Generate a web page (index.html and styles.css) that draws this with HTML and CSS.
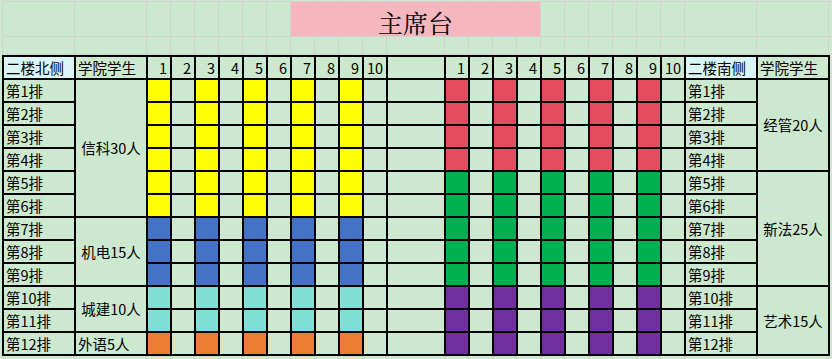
FILE: index.html
```html
<!DOCTYPE html>
<html lang="zh-CN">
<head>
<meta charset="utf-8">
<title>主席台</title>
<link rel="stylesheet" href="styles.css">
</head>
<body>
<div class="sheet">
  <div class="lines top">
    <div class="title">主席台</div>
    <i></i><i></i><i></i><i></i><i></i><i></i><i></i><i></i><i></i><i></i><i></i><i></i><i></i><i></i><i></i><i></i><i></i><i></i><i></i><i></i><i></i><i></i><i></i><i></i><i></i><i></i><i></i>
    <i></i><i></i><i></i><i></i><i></i><i></i><i></i><i></i>
    <i></i><i></i><i></i><i></i><i></i><i></i><i></i><i></i><i></i><i></i>
    <i></i><i></i><i></i><i></i><i></i><i></i><i></i><i></i><i></i><i></i><i></i><i></i><i></i><i></i><i></i><i></i><i></i><i></i><i></i><i></i><i></i><i></i><i></i><i></i><i></i><i></i><i></i>
  </div>

  <div class="tbl">
    <!-- header -->
    <b class="hd">二楼北侧</b><b>学院学生</b>
    <b class="n">1</b><b class="n">2</b><b class="n">3</b><b class="n">4</b><b class="n">5</b><b class="n">6</b><b class="n">7</b><b class="n">8</b><b class="n">9</b><b class="n">10</b>
    <b></b>
    <b class="n">1</b><b class="n">2</b><b class="n">3</b><b class="n">4</b><b class="n">5</b><b class="n">6</b><b class="n">7</b><b class="n">8</b><b class="n">9</b><b class="n">10</b>
    <b class="hd">二楼南侧</b><b>学院学生</b>

    <!-- row 1 -->
    <b>第1排</b><b class="grp r6">信科30人</b>
    <i class="y"></i><i></i><i class="y"></i><i></i><i class="y"></i><i></i><i class="y"></i><i></i><i class="y"></i><i></i>
    <i></i>
    <i class="r"></i><i></i><i class="r"></i><i></i><i class="r"></i><i></i><i class="r"></i><i></i><i class="r"></i><i></i>
    <b>第1排</b><b class="grp r4">经管20人</b>
    <!-- row 2 -->
    <b>第2排</b>
    <i class="y"></i><i></i><i class="y"></i><i></i><i class="y"></i><i></i><i class="y"></i><i></i><i class="y"></i><i></i>
    <i></i>
    <i class="r"></i><i></i><i class="r"></i><i></i><i class="r"></i><i></i><i class="r"></i><i></i><i class="r"></i><i></i>
    <b>第2排</b>
    <!-- row 3 -->
    <b>第3排</b>
    <i class="y"></i><i></i><i class="y"></i><i></i><i class="y"></i><i></i><i class="y"></i><i></i><i class="y"></i><i></i>
    <i></i>
    <i class="r"></i><i></i><i class="r"></i><i></i><i class="r"></i><i></i><i class="r"></i><i></i><i class="r"></i><i></i>
    <b>第3排</b>
    <!-- row 4 -->
    <b>第4排</b>
    <i class="y"></i><i></i><i class="y"></i><i></i><i class="y"></i><i></i><i class="y"></i><i></i><i class="y"></i><i></i>
    <i></i>
    <i class="r"></i><i></i><i class="r"></i><i></i><i class="r"></i><i></i><i class="r"></i><i></i><i class="r"></i><i></i>
    <b>第4排</b>
    <!-- row 5 -->
    <b>第5排</b>
    <i class="y"></i><i></i><i class="y"></i><i></i><i class="y"></i><i></i><i class="y"></i><i></i><i class="y"></i><i></i>
    <i></i>
    <i class="g"></i><i></i><i class="g"></i><i></i><i class="g"></i><i></i><i class="g"></i><i></i><i class="g"></i><i></i>
    <b>第5排</b><b class="grp r5">新法25人</b>
    <!-- row 6 -->
    <b>第6排</b>
    <i class="y"></i><i></i><i class="y"></i><i></i><i class="y"></i><i></i><i class="y"></i><i></i><i class="y"></i><i></i>
    <i></i>
    <i class="g"></i><i></i><i class="g"></i><i></i><i class="g"></i><i></i><i class="g"></i><i></i><i class="g"></i><i></i>
    <b>第6排</b>
    <!-- row 7 -->
    <b>第7排</b><b class="grp r3">机电15人</b>
    <i class="b"></i><i></i><i class="b"></i><i></i><i class="b"></i><i></i><i class="b"></i><i></i><i class="b"></i><i></i>
    <i></i>
    <i class="g"></i><i></i><i class="g"></i><i></i><i class="g"></i><i></i><i class="g"></i><i></i><i class="g"></i><i></i>
    <b>第7排</b>
    <!-- row 8 -->
    <b>第8排</b>
    <i class="b"></i><i></i><i class="b"></i><i></i><i class="b"></i><i></i><i class="b"></i><i></i><i class="b"></i><i></i>
    <i></i>
    <i class="g"></i><i></i><i class="g"></i><i></i><i class="g"></i><i></i><i class="g"></i><i></i><i class="g"></i><i></i>
    <b>第8排</b>
    <!-- row 9 -->
    <b>第9排</b>
    <i class="b"></i><i></i><i class="b"></i><i></i><i class="b"></i><i></i><i class="b"></i><i></i><i class="b"></i><i></i>
    <i></i>
    <i class="g"></i><i></i><i class="g"></i><i></i><i class="g"></i><i></i><i class="g"></i><i></i><i class="g"></i><i></i>
    <b>第9排</b>
    <!-- row 10 -->
    <b>第10排</b><b class="grp r2">城建10人</b>
    <i class="t"></i><i></i><i class="t"></i><i></i><i class="t"></i><i></i><i class="t"></i><i></i><i class="t"></i><i></i>
    <i></i>
    <i class="p"></i><i></i><i class="p"></i><i></i><i class="p"></i><i></i><i class="p"></i><i></i><i class="p"></i><i></i>
    <b>第10排</b><b class="grp r3">艺术15人</b>
    <!-- row 11 -->
    <b>第11排</b>
    <i class="t"></i><i></i><i class="t"></i><i></i><i class="t"></i><i></i><i class="t"></i><i></i><i class="t"></i><i></i>
    <i></i>
    <i class="p"></i><i></i><i class="p"></i><i></i><i class="p"></i><i></i><i class="p"></i><i></i><i class="p"></i><i></i>
    <b>第11排</b>
    <!-- row 12 -->
    <b>第12排</b><b>外语5人</b>
    <i class="o"></i><i></i><i class="o"></i><i></i><i class="o"></i><i></i><i class="o"></i><i></i><i class="o"></i><i></i>
    <i></i>
    <i class="p"></i><i></i><i class="p"></i><i></i><i class="p"></i><i></i><i class="p"></i><i></i><i class="p"></i><i></i>
    <b>第12排</b>
  </div>

  <div class="lines bottom">
    <i></i><i></i><i></i><i></i><i></i><i></i><i></i><i></i><i></i><i></i><i></i><i></i><i></i><i></i><i></i><i></i><i></i><i></i><i></i><i></i><i></i><i></i><i></i><i></i><i></i><i></i><i></i>
  </div>
</div>
</body>
</html>
```

FILE: styles.css
```css
html, body {
  margin: 0;
  padding: 0;
  background: #cce8cf;
}

body {
  width: 832px;
  height: 359px;
  overflow: hidden;
  font-family: "SimSun", "Noto Sans CJK SC", "DejaVu Sans", sans-serif;
  font-size: 14.5px;
  color: #000;
}

.sheet {
  display: flex;
  flex-direction: column;
}

/* light spreadsheet gridlines */
.lines {
  margin-left: 2px;
  display: grid;
  gap: 1px;
  padding-left: 1px;
  background: #d2d2d2;
  grid-template-columns: 71px 71px repeat(10, 23px) 57px repeat(10, 23px) 71px 71px 1fr;
}

.lines i {
  display: block;
  background: #cce8cf;
}

.top {
  grid-template-rows: 1px 34px 17px;
}

.bottom {
  grid-template-rows: 5px;
}

.title {
  grid-row: 2;
  grid-column: 9 / span 9;
  background: #f5b6be;
  display: flex;
  align-items: flex-end;
  justify-content: center;
  font-family: "Noto Serif CJK SC", "Noto Sans CJK SC", serif;
  font-size: 25px;
  line-height: 1;
  padding-bottom: 1px;
}

/* bordered table */
.tbl {
  margin-left: 2px;
  width: 828px;
  box-sizing: border-box;
  display: grid;
  padding: 2px;
  gap: 2px;
  background: #000;
  grid-template-columns: 70px 70px repeat(10, 22px) 56px repeat(10, 22px) 70px 70px;
  grid-template-rows: repeat(13, 21px);
}

.tbl b,
.tbl i {
  display: flex;
  align-items: center;
  background: #cce8cf;
  font-weight: normal;
  font-style: normal;
  line-height: 1;
  padding-left: 2px;
  padding-top: 1px;
  white-space: nowrap;
  overflow: hidden;
}

.tbl .hd {
  background: #d9f5f5;
}

.tbl .n {
  justify-content: flex-end;
  padding-left: 0;
  padding-right: 3px;
}

.tbl .grp {
  justify-content: center;
  padding-left: 0;
}

.r2 { grid-row: span 2; }
.r3 { grid-row: span 3; }
.r4 { grid-row: span 4; }
.r5 { grid-row: span 5; }
.r6 { grid-row: span 6; }

.tbl .y { background: #ffff00; }
.tbl .r { background: #e64c5f; }
.tbl .g { background: #00b050; }
.tbl .b { background: #4472c4; }
.tbl .t { background: #80ded7; }
.tbl .o { background: #ed7d31; }
.tbl .p { background: #7030a0; }
```
